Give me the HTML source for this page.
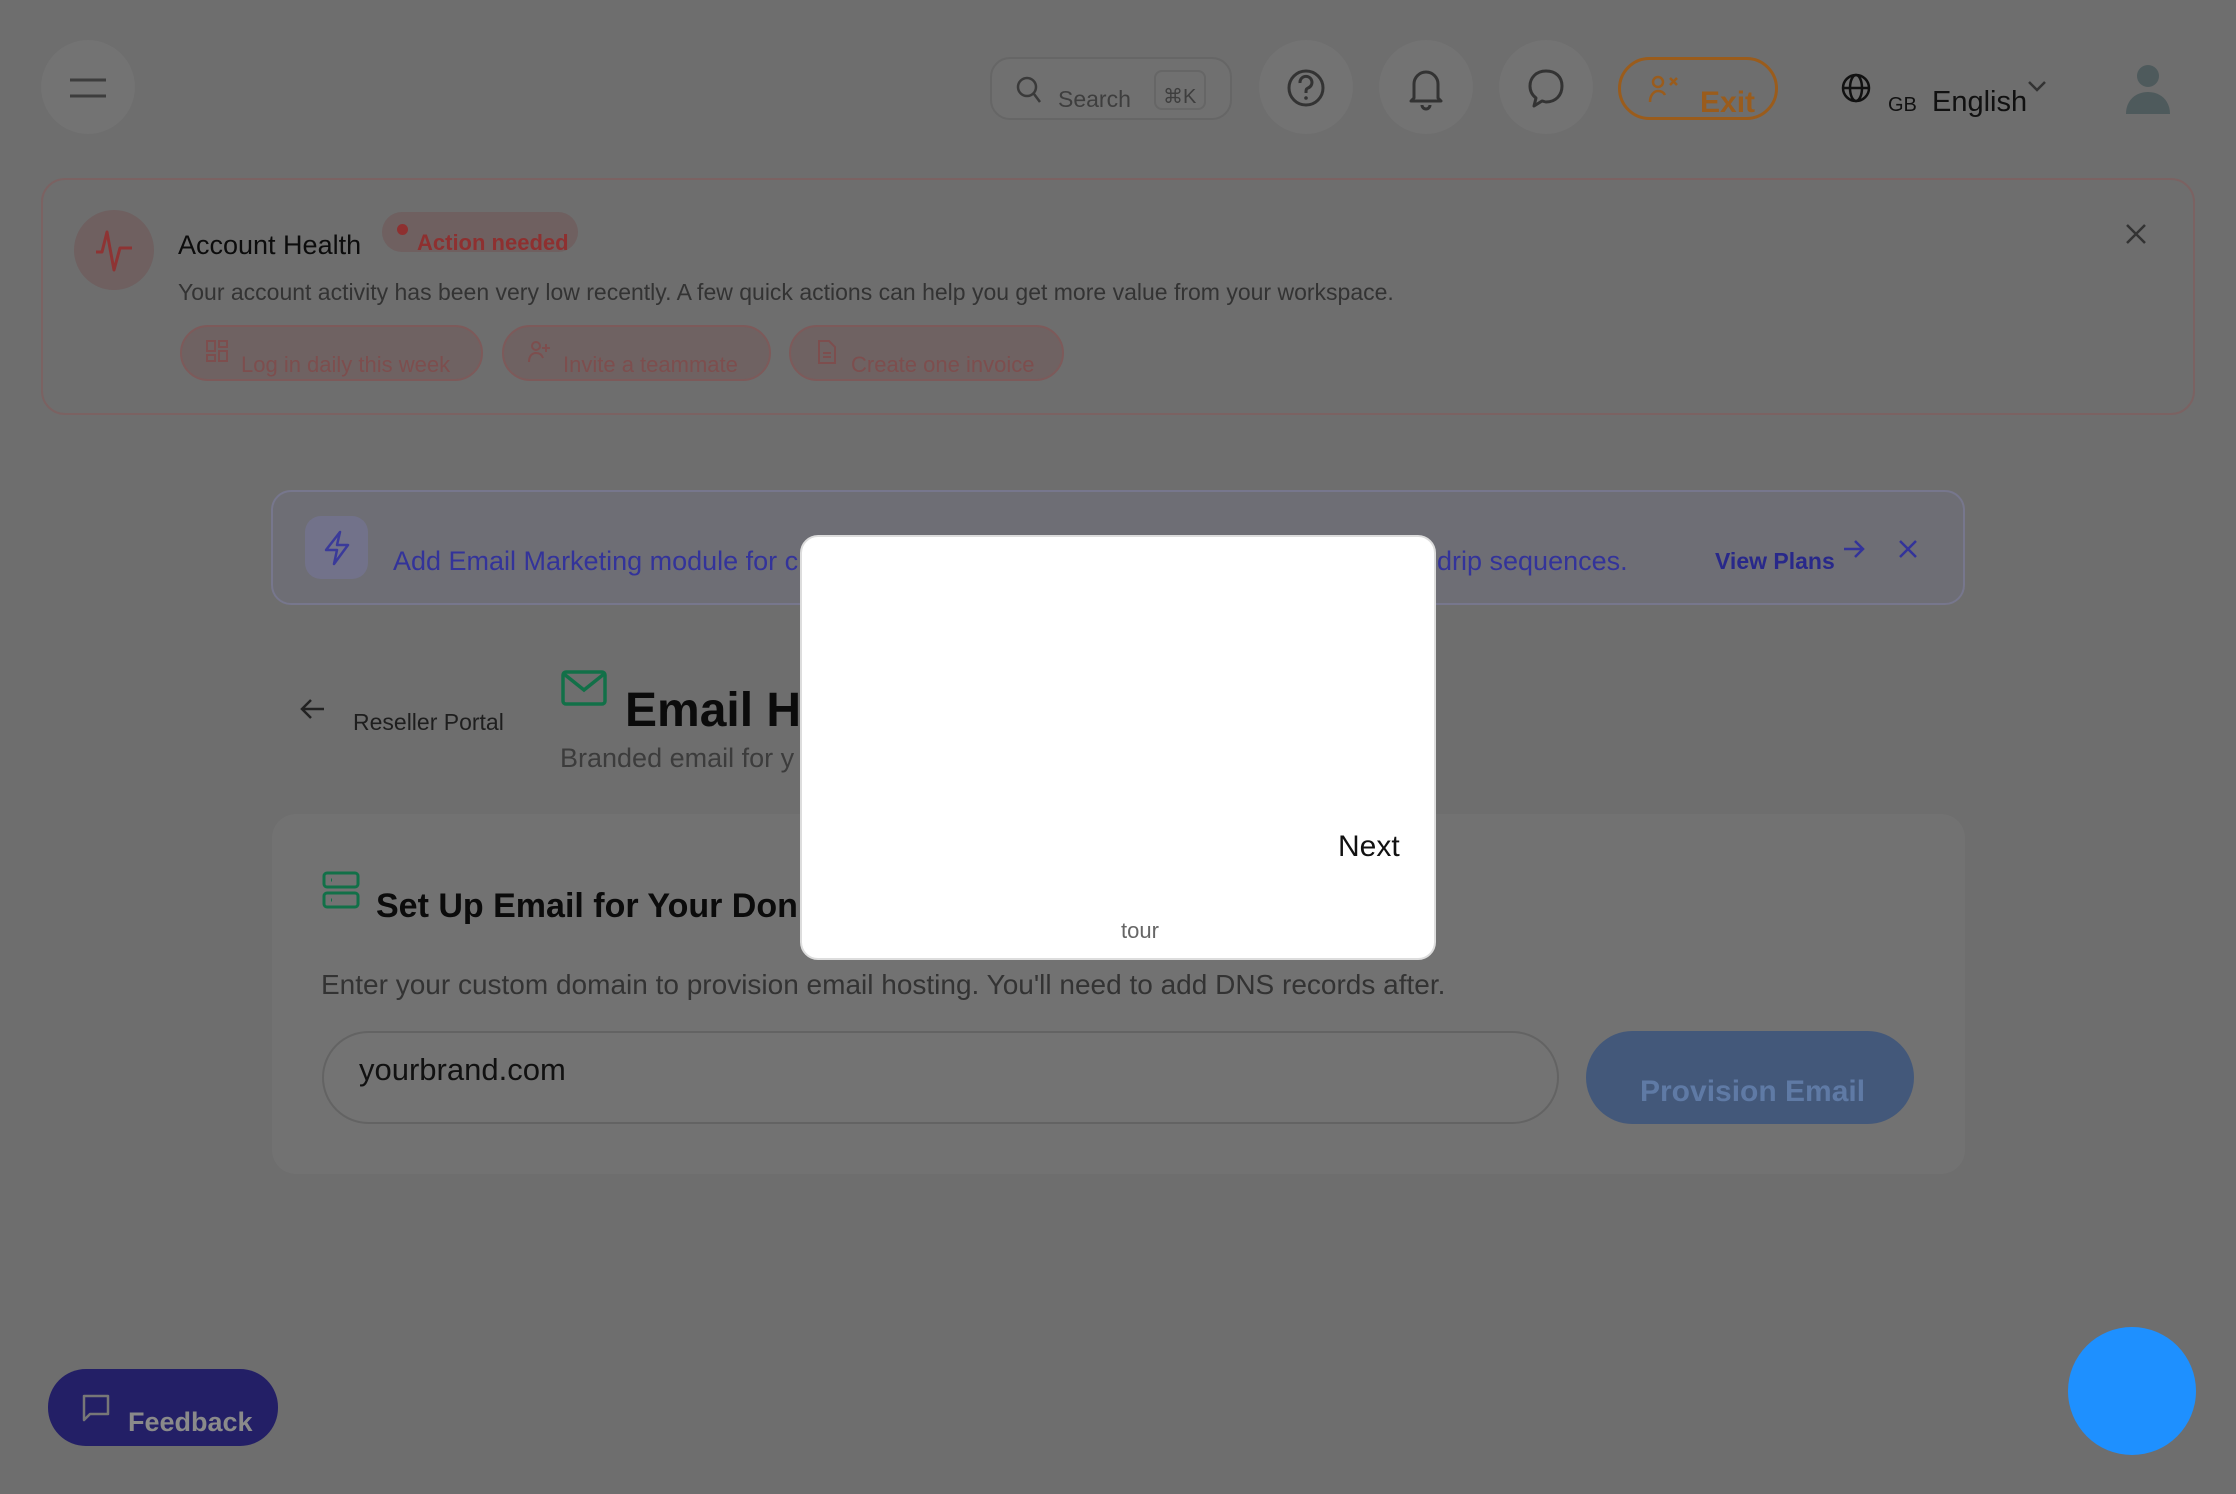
<!DOCTYPE html>
<html><head><meta charset="utf-8"><style>
*{box-sizing:border-box;margin:0;padding:0}
body{width:2236px;height:1494px;background:#6e6e6e;font-family:"Liberation Sans",sans-serif;position:relative;overflow:hidden;color:#111}
.a{position:absolute}
.circ{position:absolute;border-radius:50%;background:#737373}
.t{position:absolute;white-space:nowrap}
svg{position:absolute;overflow:visible}
</style></head><body>
<!-- header -->
<div class="circ" style="left:41px;top:40px;width:94px;height:94px"></div>
<svg style="left:70px;top:78px" width="36" height="20"><path d="M0 2H36M0 18H36" stroke="#3d3d3d" stroke-width="3"/></svg>

<div class="a" style="left:990px;top:57px;width:242px;height:63px;border:2px solid #666;border-radius:20px;background:#707070"></div>
<svg style="left:1016px;top:76px" width="26" height="28"><circle cx="11" cy="11" r="9" fill="none" stroke="#3a3a3a" stroke-width="2.5"/><path d="M18 18L24 26" stroke="#3a3a3a" stroke-width="2.5"/></svg>
<div class="t" style="left:1058px;top:86px;font-size:23px;color:#3e3e3e">Search</div>
<div class="a" style="left:1154px;top:70px;width:52px;height:40px;border:2px solid #666;border-radius:8px"></div>
<div class="t" style="left:1163px;top:84px;font-size:20px;color:#3e3e3e">⌘K</div>

<div class="circ" style="left:1259px;top:40px;width:94px;height:94px"></div>
<svg style="left:1286px;top:68px" width="40" height="40"><circle cx="20" cy="20" r="17" fill="none" stroke="#333" stroke-width="3"/><path d="M14 15a6 6 0 1 1 8 5c-2 1-2 2-2 5" fill="none" stroke="#333" stroke-width="3"/><circle cx="20" cy="30" r="1.8" fill="#333"/></svg>
<div class="circ" style="left:1379px;top:40px;width:94px;height:94px"></div>
<svg style="left:1408px;top:66px" width="36" height="44"><path d="M6 32V18a12 12 0 0 1 24 0V32l3 3H3z" fill="none" stroke="#333" stroke-width="3" stroke-linejoin="round"/><path d="M14 39a4 4 0 0 0 8 0" fill="none" stroke="#333" stroke-width="3"/></svg>
<div class="circ" style="left:1499px;top:40px;width:94px;height:94px"></div>
<svg style="left:1527px;top:68px" width="38" height="40"><path d="M19 3C9 3 3 10 3 18c0 5 2 9 6 12l-2 8 8-5c1 0 3 1 4 1 10 0 16-7 16-16S29 3 19 3z" fill="none" stroke="#333" stroke-width="3" stroke-linejoin="round"/></svg>

<div class="a" style="left:1618px;top:57px;width:160px;height:63px;border:3px solid #9a5c1c;border-radius:32px"></div>
<svg style="left:1648px;top:74px" width="34" height="32"><circle cx="10" cy="8" r="5" fill="none" stroke="#9a5c1c" stroke-width="2.5"/><path d="M2 28c0-7 4-11 8-11s6 2 7 4" fill="none" stroke="#9a5c1c" stroke-width="2.5"/><path d="M22 4l7 7M29 4l-7 7" stroke="#9a5c1c" stroke-width="2.5"/></svg>
<div class="t" style="left:1700px;top:86px;font-size:30px;color:#9a5c1c;font-weight:bold">Exit</div>

<svg style="left:1840px;top:72px" width="32" height="32"><circle cx="16" cy="16" r="13" fill="none" stroke="#111" stroke-width="2.5"/><ellipse cx="16" cy="16" rx="6" ry="13" fill="none" stroke="#111" stroke-width="2.5"/><path d="M3 16H29" stroke="#111" stroke-width="2.5"/></svg>
<div class="t" style="left:1888px;top:94px;font-size:20px;color:#111">GB</div>
<div class="t" style="left:1932px;top:86px;font-size:29px;color:#111">English</div>
<svg style="left:2027px;top:80px" width="20" height="14"><path d="M2 2l8 8 8-8" fill="none" stroke="#333" stroke-width="2.5"/></svg>
<svg style="left:2122px;top:62px" width="52" height="52"><circle cx="26" cy="14" r="11" fill="#4e5a5c"/><path d="M4 52c0-14 10-22 22-22s22 8 22 22z" fill="#4e5a5c"/></svg>

<!-- health card -->
<div class="a" style="left:41px;top:178px;width:2154px;height:237px;border:2px solid #7b6262;border-radius:24px"></div>
<div class="a" style="left:74px;top:210px;width:80px;height:80px;border-radius:50%;background:#6f6060"></div>
<svg style="left:96px;top:230px" width="38" height="42"><path d="M0 22H6L11 2 18 40 24 18H36" fill="none" stroke="#8e3434" stroke-width="3" stroke-linejoin="round"/></svg>
<div class="t" style="left:178px;top:230px;font-size:27px;color:#0c0c0c">Account Health</div>
<div class="a" style="left:382px;top:212px;width:196px;height:40px;border-radius:20px;background:#6f6060"></div>
<div class="a" style="left:397px;top:224px;width:11px;height:11px;border-radius:50%;background:#8e3030"></div>
<div class="t" style="left:417px;top:230px;font-size:22px;color:#8e3030;font-weight:bold">Action needed</div>
<div class="t" style="left:178px;top:279px;font-size:23px;color:#333">Your account activity has been very low recently. A few quick actions can help you get more value from your workspace.</div>
<div class="a" style="left:180px;top:325px;width:303px;height:56px;border:2px solid #7d5a5a;border-radius:28px;background:#6f6262"></div>
<div class="t" style="left:241px;top:352px;font-size:22px;color:#7d4e4e">Log in daily this week</div>
<svg style="left:206px;top:340px" width="22" height="26"><rect x="1" y="1" width="8" height="10" fill="none" stroke="#7d4e4e" stroke-width="2"/><rect x="13" y="1" width="8" height="6" fill="none" stroke="#7d4e4e" stroke-width="2"/><rect x="1" y="15" width="8" height="6" fill="none" stroke="#7d4e4e" stroke-width="2"/><rect x="13" y="11" width="8" height="10" fill="none" stroke="#7d4e4e" stroke-width="2"/></svg>
<div class="a" style="left:502px;top:325px;width:269px;height:56px;border:2px solid #7d5a5a;border-radius:28px;background:#6f6262"></div>
<svg style="left:528px;top:340px" width="24" height="24"><circle cx="8" cy="6" r="4" fill="none" stroke="#7d4e4e" stroke-width="2"/><path d="M1 22c0-6 3-9 7-9s6 2 7 5M18 4v8M14 8h8" fill="none" stroke="#7d4e4e" stroke-width="2"/></svg>
<div class="t" style="left:563px;top:352px;font-size:22px;color:#7d4e4e">Invite a teammate</div>
<div class="a" style="left:789px;top:325px;width:275px;height:56px;border:2px solid #7d5a5a;border-radius:28px;background:#6f6262"></div>
<svg style="left:818px;top:340px" width="18" height="24"><path d="M1 1H11L17 7V23H1z" fill="none" stroke="#7d4e4e" stroke-width="2"/><path d="M5 13H13M5 17H13" stroke="#7d4e4e" stroke-width="2"/></svg>
<div class="t" style="left:851px;top:352px;font-size:22px;color:#7d4e4e">Create one invoice</div>
<svg style="left:2126px;top:224px" width="20" height="20"><path d="M1 1L19 19M19 1L1 19" stroke="#333" stroke-width="2.5"/></svg>

<!-- promo -->
<div class="a" style="left:271px;top:490px;width:1694px;height:115px;border:2px solid #77778d;border-radius:20px;background:#6e6e75"></div>
<div class="a" style="left:305px;top:516px;width:63px;height:63px;border-radius:16px;background:#72728a"></div>
<svg style="left:323px;top:530px" width="28" height="36"><path d="M17 2L3 20H14L11 34 25 15H14z" fill="none" stroke="#3a3a9a" stroke-width="2.5" stroke-linejoin="round"/></svg>
<div class="t" style="left:393px;top:546px;font-size:27px;color:#33339a">Add Email Marketing module for c</div>
<div class="t" style="left:1437px;top:546px;font-size:27px;color:#33339a">drip sequences.</div>
<div class="t" style="left:1715px;top:548px;font-size:23px;color:#28288a;font-weight:bold">View Plans</div>
<svg style="left:1842px;top:538px" width="24" height="22"><path d="M2 11H21M13 3l8 8-8 8" fill="none" stroke="#33339a" stroke-width="2.5"/></svg>
<svg style="left:1899px;top:540px" width="18" height="18"><path d="M1 1L17 17M17 1L1 17" stroke="#33339a" stroke-width="2.5"/></svg>

<!-- title -->
<svg style="left:300px;top:698px" width="26" height="22"><path d="M24 11H3M11 2L2 11l9 9" fill="none" stroke="#222" stroke-width="2.5"/></svg>
<div class="t" style="left:353px;top:709px;font-size:23px;color:#1e1e1e">Reseller Portal</div>
<svg style="left:561px;top:670px" width="46" height="36"><rect x="2" y="2" width="42" height="32" rx="3" fill="none" stroke="#127048" stroke-width="3.5"/><path d="M3 4L23 20 43 4" fill="none" stroke="#127048" stroke-width="3.5"/></svg>
<div class="t" style="left:625px;top:683px;font-size:48px;font-weight:bold;color:#0b0b0b">Email H</div>
<div class="t" style="left:560px;top:743px;font-size:27px;color:#3c3c3c">Branded email for y</div>

<!-- card -->
<div class="a" style="left:272px;top:814px;width:1693px;height:360px;border-radius:24px;background:#727272"></div>
<svg style="left:322px;top:871px" width="38" height="38"><rect x="2" y="2" width="34" height="14" rx="3" fill="none" stroke="#127048" stroke-width="3"/><rect x="2" y="22" width="34" height="14" rx="3" fill="none" stroke="#127048" stroke-width="3"/><path d="M9 9h1M9 29h1" stroke="#127048" stroke-width="3"/></svg>
<div class="t" style="left:376px;top:887px;font-size:34px;font-weight:bold;color:#0b0b0b">Set Up Email for Your Don</div>
<div class="t" style="left:321px;top:969px;font-size:28px;color:#333">Enter your custom domain to provision email hosting. You'll need to add DNS records after.</div>
<div class="a" style="left:322px;top:1031px;width:1237px;height:93px;border:2px solid #636363;border-radius:47px;background:#737373"></div>
<div class="t" style="left:359px;top:1052px;font-size:31px;color:#111">yourbrand.com</div>
<div class="a" style="left:1586px;top:1031px;width:328px;height:93px;border-radius:47px;background:#43587a"></div>
<div class="t" style="left:1640px;top:1075px;font-size:30px;color:#5f7aa5;font-weight:bold">Provision Email</div>

<!-- modal -->
<div class="a" style="left:800px;top:535px;width:636px;height:425px;border-radius:18px;background:#fff;border:2px solid #ddd"></div>
<div class="t" style="left:1338px;top:830px;font-size:30px;color:#111">Next</div>
<div class="t" style="left:1121px;top:918px;font-size:22px;color:#666">tour</div>

<!-- feedback -->
<div class="a" style="left:48px;top:1369px;width:230px;height:77px;border-radius:38px;background:#231f66"></div>
<svg style="left:82px;top:1394px" width="28" height="28"><path d="M2 2H26V20H8L2 26z" fill="none" stroke="#777" stroke-width="2.5" stroke-linejoin="round"/></svg>
<div class="t" style="left:128px;top:1407px;font-size:27px;color:#8a8a8a;font-weight:bold">Feedback</div>
<div class="a" style="left:2068px;top:1327px;width:128px;height:128px;border-radius:50%;background:#1e90ff"></div>
</body></html>
